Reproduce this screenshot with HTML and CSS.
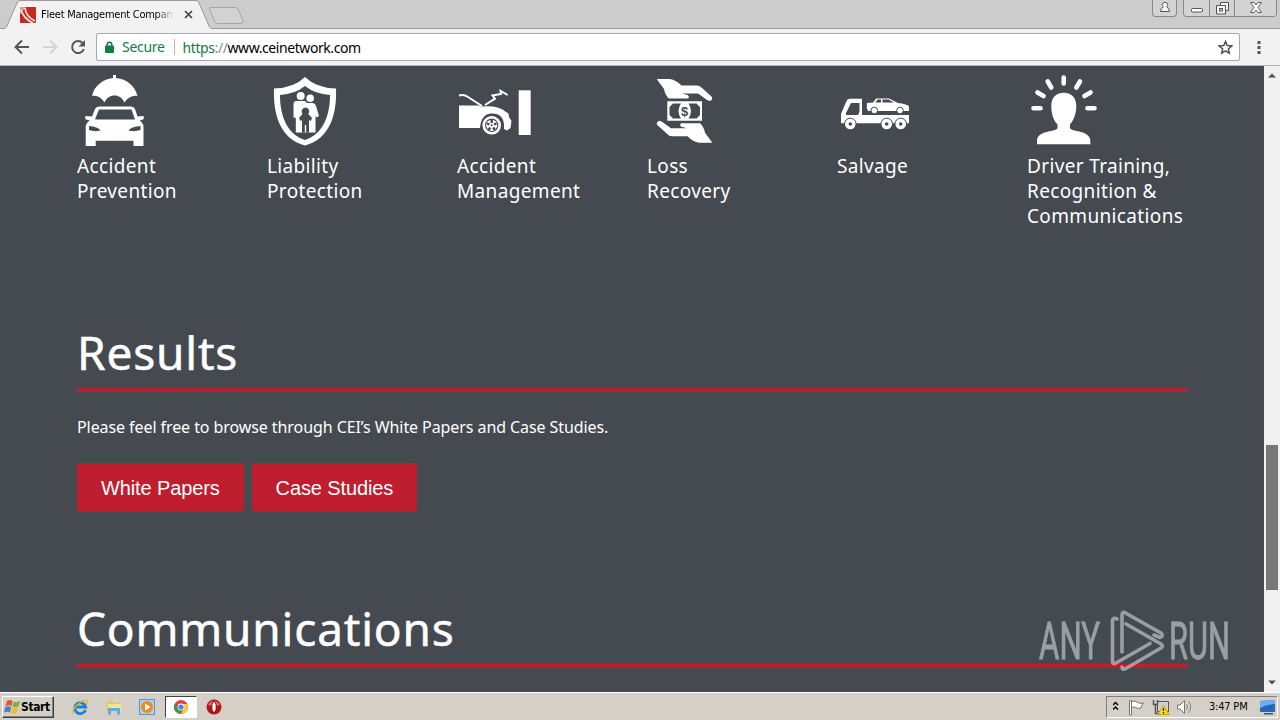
FILE: index.html
```html
<!DOCTYPE html>
<html lang="en">
<head>
    <meta charset="UTF-8">
    <meta name="viewport" content="width=device-width, initial-scale=1.0">
    <title>Fleet Management Company</title>
    <link rel="stylesheet" href="styles.css">
</head>
<body>
    <div class="tab-strip">
        <svg class="tab-shape" width="250" height="28" viewBox="0 0 250 28">
            <path d="M0 28.500H4Q6 28 7 26L17 3Q18 .5 20 .5H196Q198 .5 199 3L209 26Q210 28.500 212 28.500H250V29.500H0Z" fill="#f2f2f2"/>
            <path d="M0 28.500H4Q6 28 7 26L17 3Q18 .5 20 .5H196Q198 .5 199 3L209 26Q210 28.500 212 28.500H250" fill="none" stroke="#999"/>
            <path d="M211 7.500H235Q237 7.500 238 9L243 21Q243.500 23.500 241 23.500H218Q216 23.500 215 22L209.500 9.500Q209 7.500 211 7.500Z" fill="#d2d2d2" stroke="#a6a6a6"/>
        </svg>
        <div class="tab">
            <svg class="favicon" width="16" height="16" viewBox="0 0 16 16">
                <rect width="16" height="16" rx="1" fill="#c8281f"/>
                <path d="M0 0H6L0 7Z" fill="#e8988d"/>
                <path d="M1 3Q4 12 13 16M5 1Q6 10 15 14" fill="none" stroke="#fbe3df" stroke-width="1.800"/>
            </svg>
            <span class="tab-title">Fleet Management Company</span>
            <svg class="tab-close" width="9" height="9" viewBox="0 0 9 9"><path d="M1 1L8 8M8 1L1 8" stroke="#444" stroke-width="1.700"/></svg>
        </div>
        <div class="window-controls">
            <div class="control user">
                <svg width="12" height="13" viewBox="0 0 12 13"><path d="M6 2.500a2.300 2.300 0 0 1 1.500 4.300Q10.500 8 10.500 11.500H1.500Q1.500 8 4.500 6.800A2.300 2.300 0 0 1 6 2.500Z" fill="#f5f5f5" stroke="#555"/></svg>
            </div>
            <div class="control-group">
                <div class="control"><svg width="12" height="14" viewBox="0 0 12 14"><rect x=".5" y="8.500" width="11" height="3.500" rx="1" fill="#fff" stroke="#555"/></svg></div>
                <div class="control"><svg width="13" height="15" viewBox="0 0 13 15"><path d="M4.500 2.500H12.500V10.500H9.500V14H.5V5.500H4.500Z" fill="#f5f5f5" stroke="#555"/><path d="M4.500 5.500H9.500V10.500" fill="none" stroke="#555"/><rect x="3.500" y="8.500" width="3" height="2.500" fill="#ccc" stroke="#555"/></svg></div>
                <div class="control close"><svg width="12" height="13" viewBox="0 0 12 13"><path d="M.5 2.500H4L6 5L8 2.500H11.500L8 7.500L11.500 12.500H8L6 10L4 12.500H.5L4 7.500Z" fill="#f8f8f8" stroke="#555" stroke-width=".9"/></svg></div>
            </div>
        </div>
    </div>

    <div class="toolbar">
        <svg class="nav-icons" width="76" height="18" viewBox="0 0 76 18">
            <path d="M15 9H2M8 2.500L1.500 9L8 15.500" fill="none" stroke="#555" stroke-width="2"/>
            <path d="M29 9H42M36 2.500L42.500 9L36 15.500" fill="none" stroke="#d4d4d4" stroke-width="2"/>
            <path d="M68.500 5A6 6 0 1 0 69.800 11" fill="none" stroke="#555" stroke-width="2"/>
            <path d="M71 2V8.500H64.500Z" fill="#555"/>
        </svg>
        <div class="address">
            <svg width="9" height="12" viewBox="0 0 9 12"><path d="M2.200 5V3.500a2.300 2.300 0 0 1 4.600 0V5" fill="none" stroke="#0b8043" stroke-width="1.500"/><rect x="0" y="4.500" width="9" height="7.500" rx="1" fill="#0b8043"/></svg>
            <span class="secure">Secure</span>
            <span class="url"><span class="scheme">https</span><span class="slashes">://</span>www.ceinetwork.com</span>
            <svg class="star" width="15" height="15" viewBox="0 0 15 15"><path d="M7.500 1.500L9.200 5.600L13.700 6L10.300 8.900L11.300 13.200L7.500 10.900L3.700 13.200L4.700 8.900L1.300 6L5.800 5.600Z" fill="none" stroke="#505050" stroke-width="1.500"/></svg>
        </div>
        <svg class="menu" width="4" height="14" viewBox="0 0 4 14"><path d="M.5 1H3.500V4H.5ZM.5 6H3.500V9H.5ZM.5 11H3.500V14H.5Z" fill="#555"/></svg>
    </div>

    <div class="viewport">
        <main class="page">
            <div class="services">
                <div class="service">
                    <svg width="80" height="84" viewBox="0 0 80 84" fill="#fff">
                        <path d="M15 26C17 16 26 9 36 8V5h3v3C50 9 58 16 60.500 26C56 25 51 27 47.300 32.500C44 23 31 23 27.500 32.500C24 27 20 25 15 26Z"/>
                        <path fill-rule="evenodd" d="M22 36.500H54Q57 36.500 58 39L60.500 46.500L66 46Q68 47.500 66 49.500L62.500 50.500Q66.500 53 66.500 57V76H56.500V70.700H18.700V76H8.700V57Q8.700 53 13 50.500L9 49.500Q7 47.500 9 46L15 46.500L18 39Q19 36.500 22 36.500ZM22 39.500L18 49.500H58L54.500 39.500ZM12 56V60Q17 62 23.500 60.500Q21 56.500 12 56ZM63.500 56Q54 56.500 51.500 60.500Q58 62 63.500 60Z"/>
                    </svg>
                    <p>Accident<br>Prevention</p>
                </div>
                <div class="service">
                    <svg width="80" height="84" viewBox="0 0 80 84" fill="#fff">
                        <path fill-rule="evenodd" d="M38 7Q49 18 69 18.500C70 44 63 69 38 75.500C13 69 6 44 7 18.500Q27 18 38 7ZM38 16Q28 24 13 25C13 46 20 64 38 70C56 64 63 46 63 25Q48 24 38 16Z"/>
                        <circle cx="33.700" cy="26" r="4"/><circle cx="43.200" cy="28.300" r="3.800"/>
                        <path d="M29 31H38L40 33H45Q48 33 49 36L52 46L49.500 47.500L48.500 46V62.500H28.800V48L26.500 47.500V35Q26.500 31 29 31Z"/>
                        <path d="M38.300 37.500a4 4 0 0 1 3 6.500L45 48L43.800 51L42 50V62.500H39.200V55H37.800V62.500H35V50L33.500 51L32 48L35.500 44A4 4 0 0 1 38.300 37.500Z" fill="#454a50"/>
                    </svg>
                    <p>Liability<br>Protection</p>
                </div>
                <div class="service">
                    <svg width="80" height="84" viewBox="0 0 80 84" fill="#fff">
                        <path d="M2 35.500H22L24 36.500Q42 35 49 42L51.500 43.500L52 47L54.500 51L53.500 58L50 60.500L47 59Q48 43 34.500 43.500Q24 44 23 58H2Z"/>
                        <path d="M2 25.500Q7 24 11 27L25 36M28 35L38 28.700L35.500 25.500L44 24L43.500 21L50.700 25" fill="none" stroke="#fff" stroke-width="2"/>
                        <circle cx="34.700" cy="55.300" r="8" fill="none" stroke="#fff" stroke-width="2.600"/>
                        <circle cx="34.700" cy="55.300" r="5.600"/>
                        <path d="M34.700 50v3M30 53.500l2.500 1M39.500 53.500l-2.500 1M31.500 60l1.800-2.500M38 60l-1.800-2.500" stroke="#454a50" stroke-width="2.400"/>
                        <circle cx="34.700" cy="55.300" r="1" fill="#454a50"/>
                        <path d="M61.700 20.300H73.700V65H61.700Z"/>
                    </svg>
                    <p>Accident<br>Management</p>
                </div>
                <div class="service">
                    <svg width="80" height="84" viewBox="0 0 80 84" fill="#fff">
                        <path id="hand" d="M9.700 9H23Q29 10 34.500 15.500H50Q53 15.500 55 18L65 27Q66 30 62.500 31L60 30L51 23.500H35L40.500 25Q43 26.500 41 28.500H22Q18 25 17 19Z"/>
                        <use href="#hand" transform="rotate(180 37.500 40.900)"/>
                        <path fill-rule="evenodd" d="M20.300 31.300H55V50.700H20.300ZM26 33.500L22.500 37V45L26 48.500H34Q29 41 34 33.500ZM41.500 33.500Q46.500 41 41.500 48.500H49.500L53 45V37L49.500 33.500Z"/>
                        <text class="dollar" x="37.700" y="45.500" text-anchor="middle" fill="#454a50">$</text>
                    </svg>
                    <p>Loss<br>Recovery</p>
                </div>
                <div class="service">
                    <svg width="80" height="84" viewBox="0 0 80 84" fill="#fff">
                        <path fill-rule="evenodd" d="M13 28.700H25V45H72V53.300H4V44L9.500 31Q10.500 28.700 13 28.700ZM14 33L9 43V45H21L22.500 42V33Z"/>
                        <g stroke="#454a50" stroke-width="1"><circle cx="13.300" cy="54" r="5.800"/><circle cx="49.700" cy="54" r="5.800"/><circle cx="63.700" cy="54" r="5.800"/></g>
                        <g fill="#454a50"><circle cx="13.300" cy="54" r="1.800"/><circle cx="49.700" cy="54" r="1.800"/><circle cx="63.700" cy="54" r="1.800"/></g>
                        <path d="M30 33L36 32.500L39 28.500H52L61 33Q70 34 72 36.500V41H31L29.700 38Z"/>
                        <path d="M38.500 32.500L40.500 29.500H44V32.500ZM45.500 29.500H51.500L57 32.500H45.500Z" fill="#454a50"/>
                        <g stroke="#454a50"><circle cx="37.300" cy="40.500" r="3.300"/><circle cx="63" cy="40.500" r="3.300"/></g>
                    </svg>
                    <p>Salvage</p>
                </div>
                <div class="service">
                    <svg width="80" height="84" viewBox="0 0 80 84" fill="#fff">
                        <path d="M36.800 22.700C45 22.700 49.500 28 49.300 37C49 45 46 51 43 54.500V58C44 62 62 60 63.300 70V74.300H10V70C11.500 60 30 62 30.500 58V54.500C27 51 24.500 45 24.300 37C24 28 28.500 22.700 36.800 22.700Z"/>
                        <path d="M36.700 7.500V13.500M20.700 11.500L24.300 17.500M53 11.500L49.300 17.500M10.500 22.500L16.500 26M63.500 22.500L57.500 26M6.500 38.300H13.500M60.500 38.300H67.500" stroke="#fff" stroke-width="4.600" stroke-linecap="round"/>
                    </svg>
                    <p>Driver Training,<br>Recognition &amp;<br>Communications</p>
                </div>
            </div>

            <section class="results">
                <h2>Results</h2>
                <p class="intro">Please feel free to browse through CEI’s White Papers and Case Studies.</p>
                <div class="buttons">
                    <a class="btn">White Papers</a>
                    <a class="btn">Case Studies</a>
                </div>
            </section>

            <section class="communications">
                <h2>Communications</h2>
            </section>
        </main>
        <div class="scrollbar">
            <svg width="8" height="5" viewBox="0 0 8 5"><path d="M0 4.500L4 .5L8 4.500Z" fill="#505050"/></svg>
            <div class="thumb"></div>
            <svg class="arrow-down" width="8" height="5" viewBox="0 0 8 5"><path d="M0 .5L4 4.500L8 .5Z" fill="#505050"/></svg>
        </div>

        <!-- Watermark -->
        <svg class="watermark" width="210" height="68" viewBox="0 0 210 68">
            <text x="1" y="51" textLength="61" lengthAdjust="spacingAndGlyphs">ANY</text>
            <text x="131" y="51" textLength="61" lengthAdjust="spacingAndGlyphs">RUN</text>
            <g fill="none" stroke-width="3.600" stroke-linejoin="round" stroke-linecap="round">
                <path d="M79 11Q74.500 9 74.500 13V53Q74.500 57 78 55L112 35.500"/>
                <path d="M84 44V7Q84 3 87.500 5L123 25Q126 28 122 29.500L116 27"/>
                <path d="M88 16L123 36Q126 38 123 40L87 61Q84 62 84 59"/>
            </g>
        </svg>
    </div>

    <div class="taskbar">
        <div class="start">
            <svg width="17" height="16" viewBox="0 0 17 16">
                <path d="M3 2Q6 0 8.500 2L7.500 7Q5 5.500 1.500 7Z" fill="#e2582b"/>
                <path d="M9.500 2.500Q12.500 4 16 2L14.500 7.500Q11.500 9 8.500 7.500Z" fill="#7ab341"/>
                <path d="M1.200 8Q4.500 6.500 7.200 8.200L6 13.500Q3.500 12 0 13.500Z" fill="#4384cc"/>
                <path d="M8.200 8.700Q11 10 14.200 8.500L13 13.800Q10 15.500 7 13.800Z" fill="#f2b92c"/>
            </svg>
            <span>Start</span>
        </div>
        <div class="tasks">
            <div class="task">
                <svg width="16" height="16" viewBox="0 0 16 16"><path d="M13.500 11A5.500 5.500 0 1 1 13.700 8H4" fill="none" stroke="#1d83d4" stroke-width="2.800"/><path d="M1.500 15Q-1 12 5 6Q12-.5 15 1.500Q16 3 14 5.500" fill="none" stroke="#e5b52b" stroke-width="1.300"/></svg>
            </div>
            <div class="task">
                <svg width="16" height="16" viewBox="0 0 16 16"><path d="M1 2H6L7.500 3.500H14V12H1Z" fill="#e6c75f"/><path d="M2 5H15V12H2Z" fill="#f8e38f"/><path d="M2 9H14V15.500H11V12H5V15.500H2Z" fill="#64acd8"/></svg>
            </div>
            <div class="task">
                <svg width="16" height="16" viewBox="0 0 16 16"><rect x=".5" y=".5" width="15" height="15" fill="#a9d0f0" stroke="#5c93c8"/><circle cx="8" cy="8" r="6" fill="#f08a18"/><path d="M6 4.500L11.500 8L6 11.500Z" fill="#fff"/></svg>
            </div>
            <div class="task active">
                <svg width="14" height="14" viewBox="0 0 14 14"><circle cx="7" cy="7" r="7" fill="#e0433a"/><path d="M.9 3.600L5 10.500L7.500 14A7 7 0 0 1 .9 3.600Z" fill="#2e9f52"/><path d="M7 4H13.300A7 7 0 0 1 7 14L10 8Z" fill="#f8cc38"/><circle cx="7" cy="7" r="3.400" fill="#fff"/><circle cx="7" cy="7" r="2.600" fill="#4380e8"/></svg>
            </div>
            <div class="task">
                <svg width="16" height="16" viewBox="0 0 16 16"><circle cx="8" cy="8" r="7.500" fill="#b81417"/><path d="M2 6A6.500 6.500 0 0 1 14 6Q8 8 2 6Z" fill="#e4696a"/><ellipse cx="8" cy="8" rx="2.200" ry="5.300" fill="#fff" stroke="#7b0a0c"/></svg>
            </div>
        </div>
        <div class="tray">
            <svg width="80" height="18" viewBox="0 0 80 18">
                <path d="M0 7L2.500 4.500L5 7M0 11.500L2.500 9L5 11.500" fill="none" stroke="#000" stroke-width="1.500"/>
                <path d="M16.500 17V2.500H18.500V17ZM18.500 3.500Q22 2 24.500 4.500Q27 6 30.500 5Q28 8 28 10Q24 11 22.500 9.500Q20.500 8.500 18.500 9.500Z" fill="#fff" stroke="#777"/>
                <path d="M44.500 3.500H55.500V13.500H44.500Z" fill="#cfd2d5" stroke="#555"/>
                <path d="M40.500 2V6.500H44.500V2M42.500 7V15.500H46" fill="none" stroke="#555" stroke-width="1.500"/>
                <path d="M50.500 7L56 16.500H45Z" fill="#ffd91a" stroke="#b39000" stroke-width=".7"/><path d="M50.500 10V13M50.500 14V15.500" stroke="#222" stroke-width="1.300"/>
                <path d="M64.500 7H67L71.500 2.500V15.500L67 11H64.500Z" fill="#fff" stroke="#777"/>
                <path d="M73.500 6Q75.500 9 73.500 12M75.500 3Q80 9 75.500 15" fill="none" stroke="#888"/>
            </svg>
            <span class="clock">3:47 PM</span>
            <svg width="16" height="16" viewBox="0 0 16 16"><path d="M0 2L15 1V13H0Z" fill="#2467c0"/><path d="M0 2L15 1V5Q7 5 0 9Z" fill="#6cacf0"/><path d="M4 14H13V15.500H4Z" fill="#24579c"/></svg>
        </div>
    </div>
</body>
</html>
```
FILE: styles.css
```css
* {
    margin: 0;
    padding: 0;
    box-sizing: border-box;
}

body {
    display: flex;
    flex-direction: column;
    width: 1280px;
    height: 720px;
    overflow: hidden;
    background: #454a50;
    font-family: "Noto Sans", sans-serif;
}

svg {
    display: block;
    flex-shrink: 0;
}

/* Browser chrome */
.tab-strip {
    position: relative;
    display: flex;
    justify-content: space-between;
    height: 29px;
    background: #ccc;
    border-bottom: 1px solid #999;
}

.tab-shape {
    position: absolute;
    left: 0;
    top: 0;
    overflow: visible;
}

.tab {
    position: relative;
    display: flex;
    align-items: center;
    height: 29px;
    padding-left: 20px;
    font-family: "DejaVu Sans Condensed", "DejaVu Sans", sans-serif;
    font-size: 11px;
}

.tab-title {
    width: 134px;
    margin-left: 5px;
    overflow: hidden;
    white-space: nowrap;
    letter-spacing: -0.25px;
    -webkit-mask-image: linear-gradient(to right, #000 85%, transparent);
    mask-image: linear-gradient(to right, #000 85%, transparent);
}

.tab-close {
    margin-left: 9px;
}

.window-controls {
    display: flex;
    align-items: flex-start;
    gap: 6px;
    padding-right: 3px;
}

.control {
    display: flex;
    justify-content: center;
    width: 25px;
    height: 16px;
    background: #d3d3d3;
}

.user,
.control-group {
    border: 1px solid #888;
    border-top: 0;
    border-radius: 0 0 4px 4px;
}

.user {
    height: 17px;
}

.control-group {
    display: flex;
    overflow: hidden;
}

.control + .control {
    border-left: 1px solid #888;
}

.close {
    width: 42px;
}

.toolbar {
    display: flex;
    align-items: center;
    height: 37px;
    padding-left: 14px;
    background: #f2f2f2;
    border-bottom: 1px solid #b6b6b6;
}

.address {
    display: flex;
    align-items: center;
    width: 1144px;
    height: 28px;
    margin-left: 6px;
    padding: 0 6px 0 8px;
    background: #fff;
    border: 1px solid #a9a9a9;
    border-radius: 2px;
    font-size: 14px;
}

.secure {
    margin-left: 8px;
    padding-right: 9px;
    border-right: 1px solid #bbb;
    color: #0b8043;
    line-height: 16px;
    letter-spacing: -0.3px;
}

.url {
    margin-left: 8px;
    letter-spacing: -0.42px;
}

.scheme {
    color: #0b8043;
}

.slashes {
    color: #888;
}

.star {
    margin-left: auto;
}

.menu {
    margin-left: 17px;
}

/* Page */
.viewport {
    position: relative;
    display: flex;
    height: 626px;
    overflow: hidden;
}

.page {
    width: 1264px;
    height: 626px;
    padding: 4px 77px 0;
    overflow: hidden;
    color: #fff;
}

.services {
    display: grid;
    grid-template-columns: repeat(6, 190px);
    height: 254px;
}

.service p {
    font-size: 19px;
    line-height: 25px;
    letter-spacing: 0.35px;
    white-space: nowrap;
}

.dollar {
    font: bold 13px "Liberation Sans", sans-serif;
}

.results {
    height: 276px;
}

h2 {
    height: 68px;
    border-bottom: 4px solid #be1e2d;
    font-size: 46px;
    font-weight: 400;
    line-height: 57px;
    letter-spacing: 0.8px;
    -webkit-text-stroke: 0.5px #fff;
}

.intro {
    margin-top: 23px;
    font-size: 16px;
    line-height: 24px;
    letter-spacing: -0.08px;
    white-space: nowrap;
}

.buttons {
    display: flex;
    gap: 8px;
    margin-top: 24px;
}

.btn {
    height: 49px;
    padding: 0 24px;
    background: #be1e2d;
    border-radius: 4px;
    font-family: "Liberation Sans", Arial, sans-serif;
    font-size: 20px;
    line-height: 50px;
    letter-spacing: -0.12px;
}

.scrollbar {
    display: flex;
    flex-direction: column;
    align-items: center;
    width: 16px;
    padding: 7px 0;
    background: #f1f1f1;
}

.thumb {
    width: 12px;
    height: 145px;
    margin-top: 367px;
    background: #787878;
}

.arrow-down {
    margin-top: auto;
}

.watermark {
    position: absolute;
    left: 1038px;
    top: 542px;
    opacity: 0.5;
    fill: #f0f4f8;
    stroke: #f0f4f8;
}

.watermark text {
    font: 400 51px Roboto, sans-serif;
    stroke-width: 0.8;
}

/* Taskbar */
.taskbar {
    display: flex;
    align-items: center;
    height: 28px;
    background: #d4d0c8;
    border-top: 1px solid #fff;
    font-family: "DejaVu Sans Condensed", "DejaVu Sans", sans-serif;
    font-size: 11px;
}

.start {
    display: flex;
    align-items: center;
    width: 52px;
    height: 22px;
    margin-left: 2px;
    padding-left: 1px;
    border: 1px solid;
    border-color: #fff #404040 #404040 #fff;
    box-shadow: inset -1px -1px #808080;
    font-size: 12px;
    font-weight: bold;
    letter-spacing: -0.4px;
}

.tasks {
    display: flex;
    gap: 1.6px;
    margin-left: 10px;
}

.task {
    display: flex;
    align-items: center;
    justify-content: center;
    width: 32px;
    height: 22px;
}

.active {
    background: #fff;
    border: 1px solid;
    border-color: #404040 #fff #fff #404040;
}

.tray {
    display: flex;
    align-items: center;
    width: 172px;
    height: 22px;
    margin-left: auto;
    margin-right: 2px;
    padding-left: 6px;
    border: 1px solid;
    border-color: #808080 #fff #fff #808080;
}

.clock {
    width: 40px;
    margin: 0 11px 0 16px;
    white-space: nowrap;
    letter-spacing: -0.2px;
}
```
